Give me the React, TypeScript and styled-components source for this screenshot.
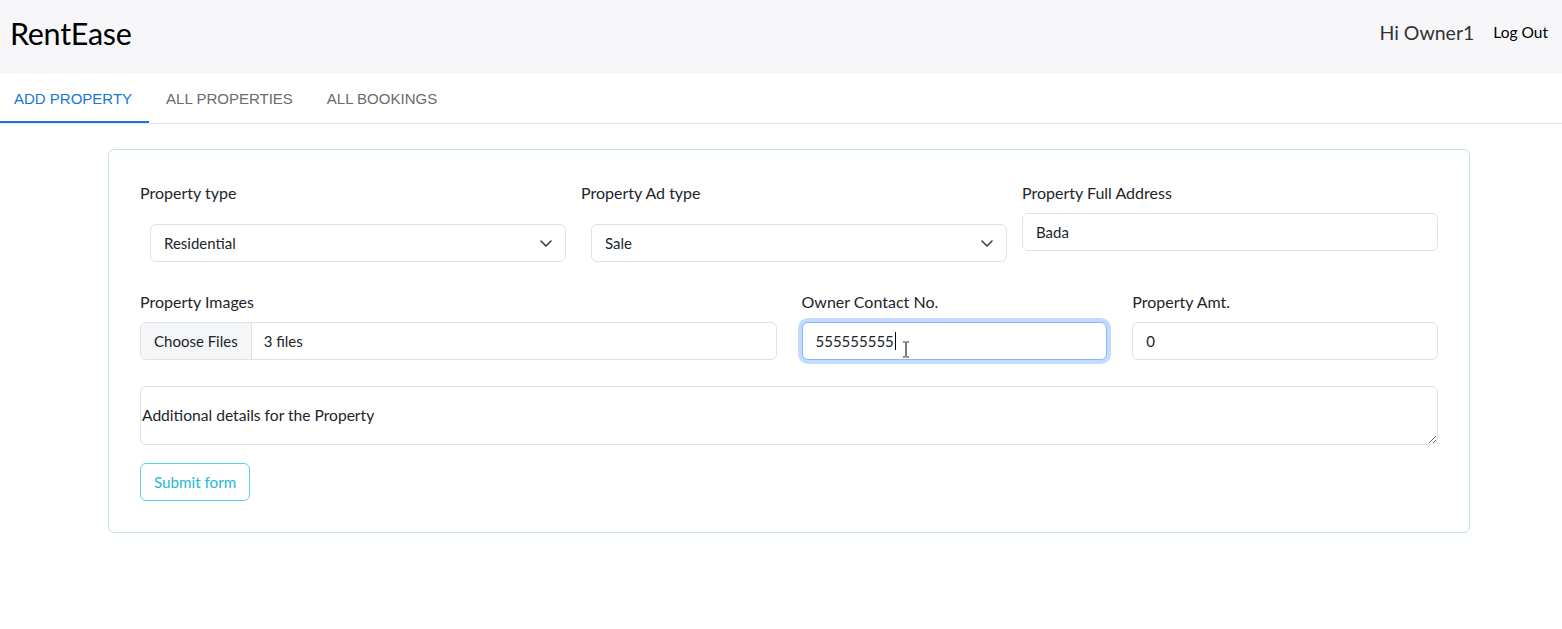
import React from "react";
import styled, { createGlobalStyle } from "styled-components";

const Global = createGlobalStyle`
  html, body { margin: 0; padding: 0; background: #fff; }
  body { font-family: Lato, "Open Sans", sans-serif; color: #212529; }
  * { box-sizing: border-box; }
`;

const Page = styled.div`
  width: 1562px;
  min-height: 629px;
  background: #fff;
`;

const Header = styled.header`
  height: 74px;
  background: #f7f7fa;
  display: flex;
  align-items: center;
  justify-content: space-between;
  padding: 0 14px 0 10px;
`;

const Logo = styled.div`
  font-family: Lato, sans-serif;
  font-size: 30.5px;
  color: #000;
  letter-spacing: -0.3px;
  margin-top: -8px;
`;

const UserArea = styled.div`
  display: flex;
  align-items: center;
  gap: 19px;
  margin-top: -10px;
`;

const Greeting = styled.span`
  font-size: 19.5px;
  color: #333;
`;

const LogOut = styled.a`
  font-size: 15.5px;
  color: #000;
  text-decoration: none;
  cursor: pointer;
`;

const TabBar = styled.nav`
  display: flex;
  height: 50px;
  border-bottom: 1px solid #e6e6e6;
`;

const Tab = styled.div<{ $active?: boolean }>`
  height: 49px;
  padding: 2px 17px 0 17px;
  display: flex;
  align-items: center;
  font-family: "Liberation Sans", Arial, sans-serif;
  font-size: 15px;
  text-transform: uppercase;
  color: ${(p) => (p.$active ? "#1976d2" : "#6b6b6b")};
  border-bottom: 2px solid ${(p) => (p.$active ? "#1976d2" : "transparent")};
  cursor: pointer;
  &:first-child { padding-left: 14px; }
`;

const Card = styled.section`
  width: 1362px;
  margin: 25px 0 0 108px;
  border: 1px solid #bfe1e9;
  border-radius: 6px;
  padding: 31px 31px 31px 31px;
`;

const Row = styled.div<{ $cols: string; $mt?: number }>`
  display: grid;
  grid-template-columns: ${(p) => p.$cols};
  column-gap: 25px;
  margin-top: ${(p) => p.$mt ?? 0}px;
`;

const Field = styled.div`
  display: flex;
  flex-direction: column;
  min-width: 0;
`;

const Label = styled.label`
  font-size: 16px;
  line-height: 24px;
  margin-bottom: 8px;
  color: #212529;
`;

const controlBase = `
  height: 38px;
  border: 1px solid #dee2e6;
  border-radius: 6px;
  background: #fff;
  font-family: Lato, sans-serif;
  font-size: 15px;
  color: #212529;
  line-height: 24px;
  padding: 6px 13px;
  outline: none;
  width: 100%;
`;

const SelectWrap = styled.div`
  position: relative;
  margin: 11px -10px 0 10px;
`;

const Select = styled.select`
  ${controlBase}
  appearance: none;
  -webkit-appearance: none;
  padding-right: 36px;
`;

const Chevron = styled.svg`
  position: absolute;
  right: 14px;
  top: 16px;
  width: 12px;
  height: 7px;
  pointer-events: none;
`;

const Input = styled.input<{ $focused?: boolean }>`
  ${controlBase}
  ${(p) =>
    p.$focused
      ? `border-color: #86b7fe; box-shadow: 0 0 0 4px rgba(13,110,253,0.25);`
      : ""}
`;

const InputWrap = styled.div`
  position: relative;
`;

const Caret = styled.span`
  position: absolute;
  left: 93px;
  top: 10px;
  width: 1px;
  height: 18px;
  background: #000;
`;

const IBeam = styled.svg`
  position: absolute;
  left: 100px;
  top: 19px;
  width: 8px;
  height: 17px;
`;

const FileBox = styled.div`
  height: 38px;
  display: flex;
  border: 1px solid #dee2e6;
  border-radius: 6px;
  overflow: hidden;
  font-size: 15px;
`;

const FileButton = styled.span`
  display: flex;
  align-items: center;
  padding: 0 13px 0 13px;
  background: #f5f6f8;
  border-right: 1px solid #dee2e6;
  color: #212529;
`;

const FileName = styled.span`
  display: flex;
  align-items: center;
  padding: 0 12px;
  color: #212529;
`;

const TextArea = styled.textarea`
  display: block;
  width: 100%;
  height: 59px;
  margin-top: 26px;
  border: 1px solid #dee2e6;
  border-radius: 6px;
  font-family: Lato, sans-serif;
  font-size: 15.6px;
  line-height: 24px;
  color: #212529;
  padding: 16px 1px;
  resize: vertical;
  outline: none;
  &::placeholder { color: #212529; opacity: 1; }
`;

const SubmitButton = styled.button`
  margin-top: 18px;
  height: 38px;
  padding: 0 13px;
  border: 1px solid #5bd0ea;
  border-radius: 6px;
  background: #fff;
  color: #22b8d8;
  font-family: Lato, sans-serif;
  font-size: 15.2px;
  cursor: pointer;
`;

const ChevronIcon = () => (
  <Chevron viewBox="0 0 12 7" fill="none">
    <path d="M1 1l5 5 5-5" stroke="#343a40" strokeWidth="1.5" strokeLinecap="round" strokeLinejoin="round" />
  </Chevron>
);

export default function App() {
  return (
    <Page>
      <Global />
      <Header>
        <Logo>RentEase</Logo>
        <UserArea>
          <Greeting>Hi Owner1</Greeting>
          <LogOut>Log Out</LogOut>
        </UserArea>
      </Header>
      <TabBar>
        <Tab $active>Add Property</Tab>
        <Tab>All Properties</Tab>
        <Tab>All Bookings</Tab>
      </TabBar>
      <Card>
        <Row $cols="1fr 1fr 1fr">
          <Field>
            <Label>Property type</Label>
            <SelectWrap>
              <Select defaultValue="Residential">
                <option>Residential</option>
                <option>Commercial</option>
                <option>Land/Plot</option>
              </Select>
              <ChevronIcon />
            </SelectWrap>
          </Field>
          <Field>
            <Label>Property Ad type</Label>
            <SelectWrap>
              <Select defaultValue="Sale">
                <option>Rent</option>
                <option>Sale</option>
              </Select>
              <ChevronIcon />
            </SelectWrap>
          </Field>
          <Field>
            <Label>Property Full Address</Label>
            <Input defaultValue="Bada" />
          </Field>
        </Row>
        <Row $cols="calc(50% - 12.5px) 1fr 1fr" $mt={28}>
          <Field>
            <Label>Property Images</Label>
            <FileBox>
              <FileButton>Choose Files</FileButton>
              <FileName>3 files</FileName>
            </FileBox>
          </Field>
          <Field>
            <Label>Owner Contact No.</Label>
            <InputWrap>
              <Input $focused defaultValue="555555555" />
              <Caret />
              <IBeam viewBox="0 0 8 17" fill="none">
                <path d="M1 1h2.5M4.5 1H7M4 1.5v14M1 16h2.5M4.5 16H7" stroke="#222" strokeWidth="1.2" />
              </IBeam>
            </InputWrap>
          </Field>
          <Field>
            <Label>Property Amt.</Label>
            <Input defaultValue="0" />
          </Field>
        </Row>
        <TextArea placeholder="Additional details for the Property" />
        <SubmitButton>Submit form</SubmitButton>
      </Card>
    </Page>
  );
}
